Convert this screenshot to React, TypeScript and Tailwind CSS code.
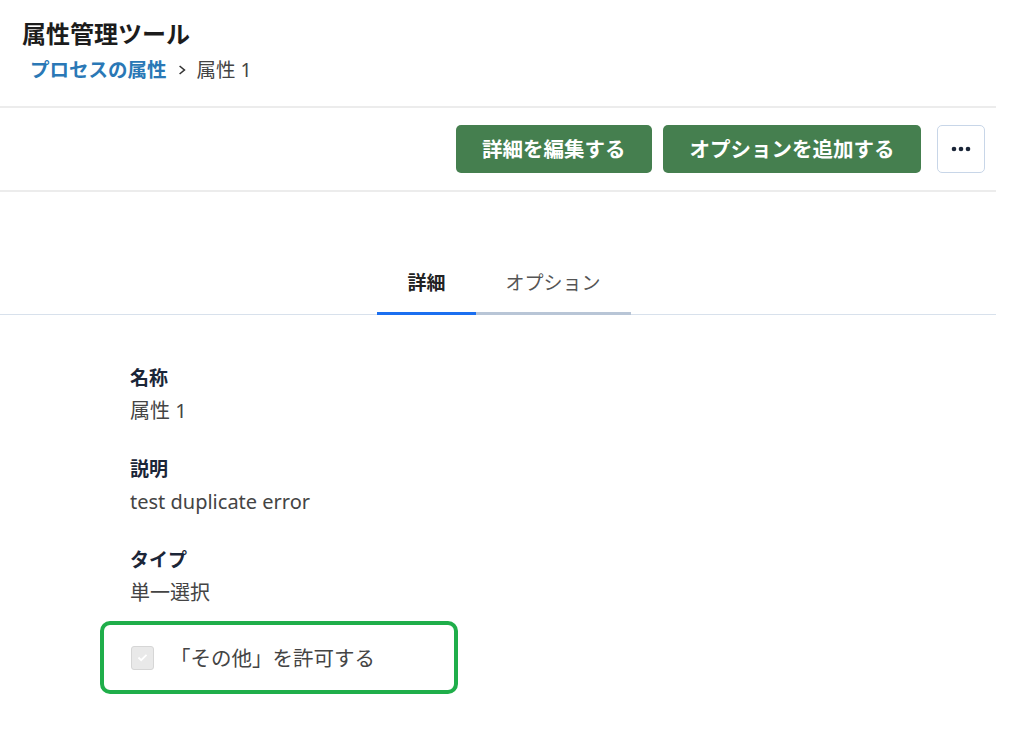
import { useState } from "react";

const FONT = "font-['Noto_Sans','Noto_Sans_CJK_JP',sans-serif]";

function Field({ label, value, last }: { label: string; value: string; last?: boolean }) {
  return (
    <div className={last ? "" : "mb-[28px]"}>
      <div className="text-[19px] font-bold leading-[30px] text-[#1b2638]">{label}</div>
      <div className="mt-[3px] text-[20px] leading-[30px] text-[#444]">{value}</div>
    </div>
  );
}

export default function App() {
  const [tab, setTab] = useState<"detail" | "options">("detail");

  return (
    <div className={`${FONT} min-h-[731px] w-[1024px] bg-white`}>
      <div className="w-[996px]">
        <div className="px-[22px] pt-[19px] pb-[21px]">
          <h1 className="text-[24px] font-bold leading-[30px] text-[#1c1c1c]">属性管理ツール</h1>
          <div className="mt-[6px] flex items-center pl-[8px] text-[19.5px] leading-[30px]">
            <a className="font-bold text-[#2a78b6]">プロセスの属性</a>
            <svg viewBox="0 0 10 14" className="mx-[11px] h-[12px] w-[8px]" fill="none" stroke="#333" strokeWidth="2">
              <polyline points="2,2 8,7 2,12" />
            </svg>
            <span className="text-[#444]">属性 1</span>
          </div>
        </div>

        <div className="flex items-center justify-end gap-[11px] border-y-2 border-[#ececec] py-[17px] pr-[11px]">
          <button className="h-[48px] rounded-[5px] bg-[#457f4f] px-[26.5px] text-[20.5px] font-bold text-white">詳細を編集する</button>
          <button className="h-[48px] rounded-[5px] bg-[#457f4f] px-[26.5px] text-[20.5px] font-bold text-white">オプションを追加する</button>
          <button className="ml-[5px] flex h-[48px] w-[48px] items-center justify-center rounded-[5px] border border-[#c8d6e8] bg-white">
            <svg viewBox="0 0 20 6" className="h-[6px] w-[20px]" fill="#1b2638">
              <circle cx="3" cy="3" r="2.3" />
              <circle cx="10" cy="3" r="2.3" />
              <circle cx="17" cy="3" r="2.3" />
            </svg>
          </button>
        </div>

        <div className="mt-[77px] flex justify-center border-b border-[#d8e1ec] pl-[12px]">
          <button
            onClick={() => setTab("detail")}
            className={`-mb-px h-[46px] border-b-[3px] px-[30px] pb-[15px] text-[19px] leading-[28px] ${tab === "detail" ? "border-[#1b6ff0] font-bold text-[#222]" : "border-[#b8c5d6] text-[#555]"}`}
          >
            詳細
          </button>
          <button
            onClick={() => setTab("options")}
            className={`-mb-px h-[46px] border-b-[3px] px-[30px] pb-[15px] text-[19px] leading-[28px] ${tab === "options" ? "border-[#1b6ff0] font-bold text-[#222]" : "border-[#b8c5d6] text-[#555]"}`}
          >
            オプション
          </button>
        </div>

        <div className="px-[130px] pt-[48px]">
          <Field label="名称" value="属性 1" />
          <Field label="説明" value="test duplicate error" />
          <Field label="タイプ" value="単一選択" last />
          <div className="-ml-[30px] mt-[13px] flex h-[73px] w-[358px] items-center gap-[16px] rounded-[10px] border-[4px] border-[#1fae4a] pl-[27px]">
            <span className="flex h-[24px] w-[23px] items-center justify-center rounded-[3px] border border-[#d6d6d6] bg-[#e9e9e9]">
              <svg viewBox="0 0 12 10" className="h-[9px] w-[11px]" fill="none" stroke="#fff" strokeWidth="2">
                <polyline points="1.5,5 4.5,8 10.5,2" />
              </svg>
            </span>
            <span className="text-[20.5px] leading-[30px] text-[#444]">「その他」を許可する</span>
          </div>
        </div>
      </div>
    </div>
  );
}
